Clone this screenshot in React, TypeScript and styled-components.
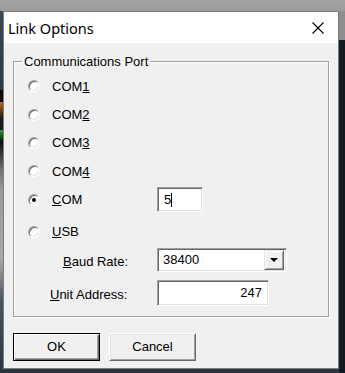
import styled, { createGlobalStyle } from "styled-components";

const GlobalStyle = createGlobalStyle`
  html, body {
    margin: 0;
    padding: 0;
  }
  body {
    width: 345px;
    height: 373px;
    overflow: hidden;
    font-family: "Liberation Sans", Arial, sans-serif;
  }
`;

const Desktop = styled.div`
  width: 345px;
  height: 373px;
  box-sizing: border-box;
  padding: 11px 0 0 3px;
  overflow: hidden;
  background:
    linear-gradient(to bottom, #a3a3a3 0, #9a9a9a 11px, transparent 11px),
    linear-gradient(to right, transparent 0, transparent 339px, #8e8e8e 339px) top / 345px 40px no-repeat,
    linear-gradient(to right, transparent 0, transparent 339px, #141a22 339px),
    linear-gradient(to bottom, #3b4a55 0, #2b3a44 90px, #0c0c0c 90px, #0c0c0c 102px, #b86a1c 102px,
      #1a1a1a 118px, #1a1a1a 130px, #2ba02b 130px, #0f0f0f 142px, #6c7278 170px, #9a9a9a 190px,
      #a8a8a8 260px, #4a5560 300px, #2a3440 373px);
`;

const Window = styled.div`
  width: 336px;
  height: 358px;
  box-sizing: border-box;
  border: 1px solid #7c7c7c;
  background: #f0f0f0;
  display: flex;
  flex-direction: column;
`;

const TitleBar = styled.div`
  height: 31px;
  background: #ffffff;
  display: flex;
  align-items: center;
  justify-content: space-between;
  padding: 0 14px 0 4px;
`;

const Title = styled.span`
  font-family: "Noto Sans", "Open Sans", sans-serif;
  font-size: 14.5px;
  color: #000;
  padding-top: 1px;
`;

const CloseIcon = styled.svg`
  width: 12px;
  height: 12px;
  display: block;
`;

const Client = styled.div`
  flex: 1;
  padding: 11px 9px 0 9px;
  font-size: 13px;
  color: #000;
`;

const GroupBox = styled.fieldset`
  margin: 0;
  padding: 3px 0 10px 14px;
  border: 1px solid #a0a0a0;
  box-shadow: inset 1px 1px #ffffff, 1px 1px #ffffff;
  min-width: 0;
`;

const Legend = styled.legend`
  padding: 0 2px;
  margin-left: -6px;
  line-height: 15px;
  font-size: 13px;
`;

const RadioRow = styled.div<{ $extraTop?: number }>`
  height: 28.4px;
  margin-top: ${(p) => p.$extraTop ?? 0}px;
  display: flex;
  align-items: center;
`;

const Radio = styled.span<{ $checked?: boolean }>`
  position: relative;
  width: 12px;
  height: 12px;
  box-sizing: border-box;
  border-radius: 50%;
  border: 1px solid;
  border-color: #a0a0a0 #ffffff #ffffff #a0a0a0;
  box-shadow: inset 1px 1px #696969, inset -1px -1px #e3e3e3;
  background: #ffffff;
  margin-right: 12px;
  flex: none;

  &::after {
    content: "";
    display: ${(p) => (p.$checked ? "block" : "none")};
    position: absolute;
    left: 3px;
    top: 3px;
    width: 4px;
    height: 4px;
    border-radius: 50%;
    background: #000;
  }
`;

const RadioLabel = styled.span`
  width: 105px;
  flex: none;
`;

const Edit = styled.div<{ $width: number; $height: number; $align?: string }>`
  width: ${(p) => p.$width}px;
  height: ${(p) => p.$height}px;
  box-sizing: border-box;
  border: 1px solid;
  border-color: #a0a0a0 #ffffff #ffffff #a0a0a0;
  box-shadow: inset 1px 1px #696969, inset -1px -1px #e3e3e3;
  background: #ffffff;
  display: flex;
  align-items: center;
  justify-content: ${(p) => (p.$align === "right" ? "flex-end" : "flex-start")};
  padding: 0 6px;
  font-size: 13px;
`;

const Caret = styled.span`
  width: 1px;
  height: 14px;
  background: #000;
`;

const FieldRow = styled.div<{ $top: number }>`
  display: flex;
  align-items: center;
  margin-top: ${(p) => p.$top}px;
`;

const FieldLabel = styled.span<{ $indent: number }>`
  width: ${(p) => 129 - p.$indent}px;
  padding-left: ${(p) => p.$indent}px;
  padding-top: 3px;
  flex: none;
`;

const Combo = styled.div`
  width: 130px;
  height: 24px;
  box-sizing: border-box;
  border: 1px solid;
  border-color: #a0a0a0 #ffffff #ffffff #a0a0a0;
  box-shadow: inset 1px 1px #696969, inset -1px -1px #e3e3e3;
  background: #ffffff;
  display: flex;
  align-items: center;
  padding: 2px 2px 2px 5px;
`;

const ComboText = styled.span`
  flex: 1;
`;

const DropButton = styled.div`
  width: 20px;
  height: 20px;
  box-sizing: border-box;
  background: #f0f0f0;
  border: 1px solid;
  border-color: #e3e3e3 #696969 #696969 #e3e3e3;
  box-shadow: inset 1px 1px #ffffff, inset -1px -1px #a0a0a0;
  display: flex;
  align-items: center;
  justify-content: center;

  &::before {
    content: "";
    width: 0;
    height: 0;
    border-left: 4px solid transparent;
    border-right: 4px solid transparent;
    border-top: 4px solid #000;
  }
`;

const ButtonRow = styled.div`
  display: flex;
  gap: 9px;
  margin-top: 16px;
`;

const Button = styled.div<{ $default?: boolean }>`
  width: 87px;
  height: 28px;
  box-sizing: border-box;
  background: #f0f0f0;
  border: 1px solid;
  border-color: ${(p) => (p.$default ? "#000 #000 #000 #000" : "#ffffff #696969 #696969 #ffffff")};
  box-shadow: ${(p) =>
    p.$default
      ? "inset 1px 1px #ffffff, inset -1px -1px #696969, inset -2px -2px #a0a0a0"
      : "inset 1px 1px #e3e3e3, inset -1px -1px #a0a0a0"};
  display: flex;
  align-items: center;
  justify-content: center;
  font-size: 13px;
`;

const ports = ["1", "2", "3", "4"];

export default function App() {
  return (
    <>
      <GlobalStyle />
      <Desktop>
        <Window>
          <TitleBar>
            <Title>Link Options</Title>
            <CloseIcon viewBox="0 0 12 12">
              <path d="M0.5 0.5 L11.5 11.5 M11.5 0.5 L0.5 11.5" stroke="#000" strokeWidth="1.1" fill="none" />
            </CloseIcon>
          </TitleBar>
          <Client>
            <GroupBox>
              <Legend>Communications Port</Legend>
              {ports.map((n) => (
                <RadioRow key={n}>
                  <Radio />
                  <RadioLabel>
                    COM<u>{n}</u>
                  </RadioLabel>
                </RadioRow>
              ))}
              <RadioRow>
                <Radio $checked />
                <RadioLabel>
                  <u>C</u>OM
                </RadioLabel>
                <Edit $width={46} $height={25}>
                  5<Caret />
                </Edit>
              </RadioRow>
              <RadioRow $extraTop={3.6}>
                <Radio />
                <RadioLabel>
                  <u>U</u>SB
                </RadioLabel>
              </RadioRow>
              <FieldRow $top={2}>
                <FieldLabel $indent={35}>
                  <u>B</u>aud Rate:
                </FieldLabel>
                <Combo>
                  <ComboText>38400</ComboText>
                  <DropButton />
                </Combo>
              </FieldRow>
              <FieldRow $top={8}>
                <FieldLabel $indent={22}>
                  <u>U</u>nit Address:
                </FieldLabel>
                <Edit $width={112} $height={26} $align="right">
                  247
                </Edit>
              </FieldRow>
            </GroupBox>
            <ButtonRow>
              <Button $default>OK</Button>
              <Button>Cancel</Button>
            </ButtonRow>
          </Client>
        </Window>
      </Desktop>
    </>
  );
}
